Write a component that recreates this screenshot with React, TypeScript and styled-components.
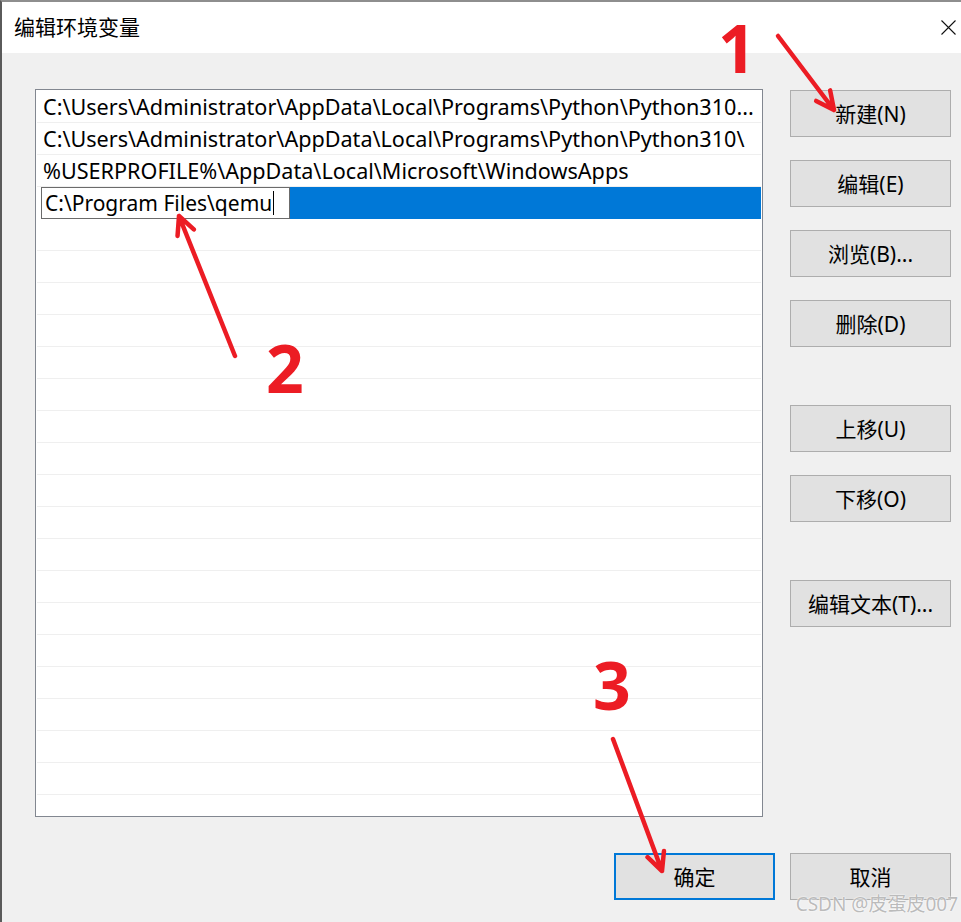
import React from 'react';
import styled, { createGlobalStyle, css } from 'styled-components';

const GlobalStyle = createGlobalStyle`
  html, body {
    margin: 0;
    padding: 0;
    background: #f0f0f0;
  }
  body {
    font-family: 'Noto Sans', 'Noto Sans CJK SC', sans-serif;
  }
`;

const RED = '#ec1c24';
const BLUE = '#0078d7';

const Window = styled.div`
  position: relative;
  width: 961px;
  height: 922px;
  box-sizing: border-box;
  border-top: 2px solid #8e8e8e;
  border-left: 2px solid #5a5a5a;
  background: #f0f0f0;
  overflow: hidden;
  font-family: 'Noto Sans', 'Noto Sans CJK SC', sans-serif;
  color: #000;
`;

const TitleBar = styled.div`
  height: 51px;
  background: #fff;
  display: flex;
  align-items: center;
  justify-content: space-between;
  padding: 0 5px 0 12px;
`;

const Title = styled.div`
  font-family: 'Noto Sans CJK SC', sans-serif;
  font-size: 21px;
  padding-bottom: 3px;
`;

const CloseBox = styled.div`
  width: 15px;
  height: 15px;
  display: flex;
`;

const Body = styled.div`
  padding: 36px 0 0 33px;
`;

const Main = styled.div`
  display: flex;
  gap: 27px;
  align-items: flex-start;
`;

const ListBox = styled.div`
  width: 728px;
  height: 728px;
  box-sizing: border-box;
  border: 1px solid #828790;
  background: #fff;
  padding: 1px;
  overflow: hidden;
`;

const Row = styled.div<{ $selected?: boolean }>`
  height: 32px;
  box-sizing: border-box;
  border-bottom: 1px solid #efefef;
  display: flex;
  align-items: center;
  padding-left: 6px;
  font-size: 21.6px;
  white-space: nowrap;
  ${(p) =>
    p.$selected &&
    css`
      padding-left: 4px;
      border-bottom: none;
      align-items: stretch;
    `}
`;

const EditBox = styled.div`
  width: 249px;
  box-sizing: border-box;
  border: 1px solid #6b6b6b;
  background: #fff;
  display: flex;
  align-items: center;
  padding-left: 3px;
  font-size: 21px;
`;

const Caret = styled.span`
  display: inline-block;
  width: 1px;
  height: 24px;
  background: #000;
  margin-left: 1px;
`;

const Highlight = styled.div`
  flex: 1;
  background: ${BLUE};
`;

const SideColumn = styled.div`
  display: flex;
  flex-direction: column;
  gap: 58px;
  padding-top: 1px;
`;

const ButtonGroup = styled.div`
  display: flex;
  flex-direction: column;
  gap: 23px;
`;

const Button = styled.div<{ $primary?: boolean }>`
  width: 161px;
  height: 47px;
  box-sizing: border-box;
  background: #e1e1e1;
  border: ${(p) => (p.$primary ? `2px solid ${BLUE}` : '1px solid #adadad')};
  display: flex;
  align-items: center;
  justify-content: center;
  font-size: 21px;
  font-family: 'Noto Sans', 'Noto Sans CJK SC', sans-serif;
  padding-bottom: 1px;
`;

const Footer = styled.div`
  width: 916px;
  display: flex;
  justify-content: flex-end;
  gap: 15px;
  padding-top: 36px;
`;

const Marker = styled.span<{ $x: number; $y: number }>`
  position: absolute;
  left: ${(p) => p.$x}px;
  top: ${(p) => p.$y}px;
  color: ${RED};
  font-family: 'Noto Sans', sans-serif;
  font-weight: 700;
  font-size: 66px;
  line-height: 1;
`;

const ArrowLayer = styled.svg`
  position: absolute;
  left: -2px;
  top: -2px;
  pointer-events: none;
`;

const Watermark = styled.div`
  position: absolute;
  right: 3px;
  bottom: 5px;
  font-family: 'Noto Sans', 'Noto Sans CJK SC', sans-serif;
  font-size: 19px;
  color: rgba(175, 175, 175, 0.85);
  text-shadow: 0 0 2px #fff, 0 0 1px #fff;
`;

const paths = [
  'C:\\Users\\Administrator\\AppData\\Local\\Programs\\Python\\Python310...',
  'C:\\Users\\Administrator\\AppData\\Local\\Programs\\Python\\Python310\\',
  '%USERPROFILE%\\AppData\\Local\\Microsoft\\WindowsApps',
];

// arrow from (x1,y1) to tip (x2,y2) with an open V head
function arrowPath(x1: number, y1: number, x2: number, y2: number) {
  const dx = x1 - x2;
  const dy = y1 - y2;
  const len = Math.hypot(dx, dy);
  const ux = dx / len;
  const uy = dy / len;
  const wing = 20;
  const a = (26 * Math.PI) / 180;
  const rot = (s: number) => [
    x2 + wing * (ux * Math.cos(s) - uy * Math.sin(s)),
    y2 + wing * (ux * Math.sin(s) + uy * Math.cos(s)),
  ];
  const [ax, ay] = rot(a);
  const [bx, by] = rot(-a);
  return `M${x1} ${y1} L${x2} ${y2} M${ax} ${ay} L${x2} ${y2} L${bx} ${by}`;
}

const arrows = [
  [778, 36, 834, 110],
  [235, 356, 179, 216],
  [613, 739, 662, 871],
];

export default function App() {
  return (
    <>
      <GlobalStyle />
      <Window>
        <TitleBar>
          <Title>编辑环境变量</Title>
          <CloseBox>
            <svg width="15" height="15" viewBox="0 0 15 15">
              <path d="M0.5 0.5 L14.5 14.5 M14.5 0.5 L0.5 14.5" stroke="#111" strokeWidth="1.1" fill="none" />
            </svg>
          </CloseBox>
        </TitleBar>
        <Body>
          <Main>
            <ListBox>
              {paths.map((p) => (
                <Row key={p}>{p}</Row>
              ))}
              <Row $selected>
                <EditBox>
                  C:\Program Files\qemu
                  <Caret />
                </EditBox>
                <Highlight />
              </Row>
              {Array.from({ length: 20 }).map((_, i) => (
                <Row key={i} />
              ))}
            </ListBox>
            <SideColumn>
              <ButtonGroup>
                <Button>新建(N)</Button>
                <Button>编辑(E)</Button>
                <Button>浏览(B)...</Button>
                <Button>删除(D)</Button>
              </ButtonGroup>
              <ButtonGroup>
                <Button>上移(U)</Button>
                <Button>下移(O)</Button>
              </ButtonGroup>
              <ButtonGroup>
                <Button>编辑文本(T)...</Button>
              </ButtonGroup>
            </SideColumn>
          </Main>
          <Footer>
            <Button $primary>确定</Button>
            <Button>取消</Button>
          </Footer>
        </Body>

        <Marker $x={716} $y={12}>1</Marker>
        <Marker $x={264} $y={332}>2</Marker>
        <Marker $x={591} $y={649}>3</Marker>
        <ArrowLayer width="961" height="922" viewBox="0 0 961 922">
          {arrows.map(([x1, y1, x2, y2], i) => (
            <path
              key={i}
              d={arrowPath(x1, y1, x2, y2)}
              stroke={RED}
              strokeWidth="4.5"
              strokeLinecap="round"
              strokeLinejoin="round"
              fill="none"
            />
          ))}
        </ArrowLayer>
        <Watermark>CSDN @皮蛋皮007</Watermark>
      </Window>
    </>
  );
}
